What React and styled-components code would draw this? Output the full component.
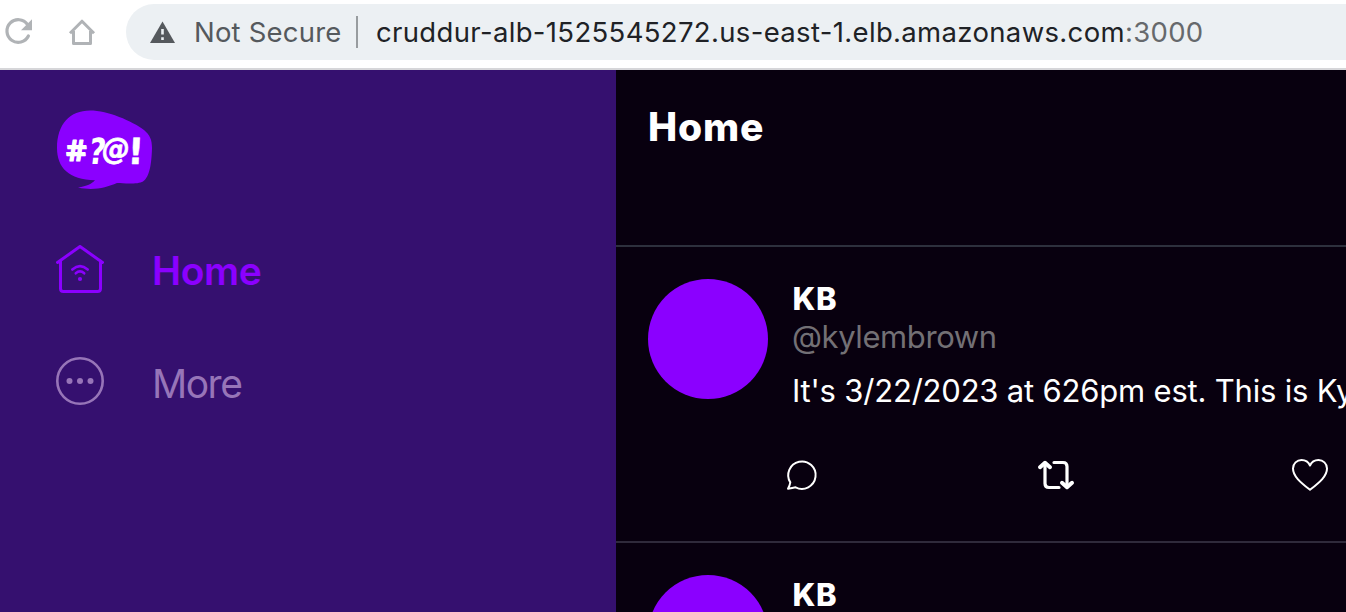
import React from "react";
import styled, { createGlobalStyle } from "styled-components";

const GlobalStyle = createGlobalStyle`
  *, *::before, *::after { box-sizing: border-box; }
  body {
    margin: 0;
    overflow: hidden;
    background: #08000f;
    font-family: Inter, "Liberation Sans", sans-serif;
    -webkit-font-smoothing: antialiased;
  }
  p, h1 { margin: 0; }
`;

const Screen = styled.div`
  display: flex;
  flex-direction: column;
  width: 100%;
  height: 100vh;
  overflow: hidden;
`;

const BrowserBar = styled.header`
  display: flex;
  align-items: flex-start;
  flex: none;
  height: 70px;
  padding-top: 4px;
  background: #fff;
  border-bottom: 2px solid #d6d6d9;
`;

const BarIcon = styled.svg`
  flex: none;
  display: block;
  width: ${(p) => p.$width}px;
  height: 56px;
`;

const AddressField = styled.div`
  display: flex;
  align-items: center;
  flex: 1;
  height: 56px;
  padding-left: 23px;
  background: #ecf0f3;
  border-radius: 28px 0 0 28px;
  white-space: nowrap;
`;

const Warning = styled.svg`
  flex: none;
  width: 27px;
  height: 24px;
`;

const SecurityLabel = styled.span`
  width: 162px;
  margin-left: 18px;
  font-size: 27.5px;
  line-height: 56px;
  letter-spacing: 0.2px;
  color: #55595d;
`;

const FieldDivider = styled.span`
  width: 2px;
  height: 32px;
  margin-right: 18px;
  background: #989c9f;
`;

const Url = styled.span`
  font-size: 27.5px;
  line-height: 56px;
  letter-spacing: 0.34px;
  color: #202226;
`;

const Port = styled.span`
  color: #66696c;
`;

const AppBody = styled.div`
  display: flex;
  flex: 1;
  min-height: 0;
`;

const Sidebar = styled.nav`
  display: flex;
  flex-direction: column;
  flex: none;
  width: 616px;
  padding: 40px 56px;
  background: #35106f;
`;

const Logo = styled.svg`
  width: 98px;
  height: 80px;
  margin-bottom: 25px;
`;

const LogoText = styled.text`
  font-family: "DejaVu Sans", sans-serif;
  font-weight: 700;
  fill: #fff;
  stroke: #fff;
  stroke-width: ${(p) => p.$stroke || 0};
  stroke-linejoin: round;
`;

const NavItem = styled.div`
  display: flex;
  align-items: center;
  height: 112px;
  gap: 48px;
  color: ${(p) => (p.$active ? "#8b00ff" : "#9775b8")};
`;

const NavIcon = styled.svg`
  flex: none;
  width: 48px;
  height: 48px;
  margin-top: -5px;
`;

const NavLabel = styled.span`
  padding-top: ${(p) => (p.$active ? 0 : 1)}px;
  font-size: 39px;
  line-height: 48px;
  font-weight: ${(p) => (p.$active ? 600 : 400)};
  letter-spacing: ${(p) => (p.$active ? -0.4 : -1.5)}px;
`;

const Feed = styled.main`
  flex: 1;
  min-width: 0;
  overflow: hidden;
  background: #08000f;
`;

const FeedHeader = styled.div`
  height: 177px;
  padding: 33px 32px;
  border-bottom: 2px solid #2d303d;
`;

const FeedTitle = styled.h1`
  font-size: 39px;
  line-height: 48px;
  font-weight: 800;
  letter-spacing: 0.8px;
  color: #fff;
`;

const Post = styled.article`
  height: 296px;
  padding: 32px;
  padding-right: 0;
  border-bottom: 2px solid #2f2a3b;
`;

const PostTop = styled.div`
  display: flex;
  gap: 24px;
`;

const Avatar = styled.div`
  flex: none;
  width: 120px;
  height: 120px;
  border-radius: 50%;
  background: #8b00ff;
`;

const PostContent = styled.div`
  display: flex;
  flex-direction: column;
  white-space: nowrap;
`;

const DisplayName = styled.span`
  height: 38px;
  padding-left: 0.6px;
  font-size: 31px;
  line-height: 40px;
  font-weight: 800;
  letter-spacing: 0.4px;
  color: #fff;
`;

const Handle = styled.span`
  height: 38px;
  font-size: 31px;
  line-height: 40px;
  letter-spacing: -0.4px;
  color: #737075;
`;

const Message = styled.p`
  margin-top: 16px;
  font-size: 31px;
  line-height: 40px;
  letter-spacing: -0.2px;
  color: #fff;
`;

const Actions = styled.div`
  display: flex;
  gap: 214px;
  margin: 44px 0 0 134px;
`;

const ActionIcon = styled.svg`
  flex: none;
  width: 40px;
  height: 40px;
`;

const posts = [
  { id: 1, name: "KB", handle: "@kylembrown", message: "It's 3/22/2023 at 626pm est. This is Ky" },
  { id: 2, name: "KB" },
];

const ReloadIcon = () => (
  <BarIcon $width={54} viewBox="0 4 54 56" fill="none">
    <path d="M27.500 24.500A11.300 11.300 0 1 0 28.400 36" stroke="#b0b3b6" strokeWidth="3.2" strokeLinecap="round" />
    <path d="M32 19.3V30.2H21Z" fill="#b0b3b6" />
  </BarIcon>
);

const BrowserHomeIcon = () => (
  <BarIcon $width={72} viewBox="54 4 72 56" fill="none" stroke="#b0b3b6" strokeWidth="3" strokeLinejoin="round">
    <path d="M70 33.2L82 21.2L94 33.2" strokeLinecap="butt" />
    <path d="M73.5 31V43.4H90.5V31" />
  </BarIcon>
);

const WarningIcon = () => (
  <Warning viewBox="0 0 27 24">
    <path d="M13.5 1.5L26 23H1Z" fill="#55595d" />
    <path d="M13.5 9V14.5M13.5 17.2V20" stroke="#ecf0f3" strokeWidth="2.6" />
  </Warning>
);

const BrandLogo = () => (
  <Logo viewBox="56 110 98 80">
    <path
      d="M57 148C57 124 70 110.500 90 110.500C108 110.500 132 121 144 130C150 135 152 140 152 148C151.500 169 148 178 143 181.500C138 184.500 124 183.500 117 183C106 187.500 94 191 78 187.500C87 186.500 92 183.500 95 180.300C69 179.500 57 168 57 148Z"
      fill="#8b00ff"
    />
    <LogoText $stroke={1.2} transform="translate(65.500 160.500) scale(.97 1) skewX(5)" fontSize="29">#</LogoText>
    <LogoText transform="translate(87.500 163.500) scale(.8 1) skewX(-9)" fontSize="36">?</LogoText>
    <LogoText $stroke={0.7} transform="translate(100.500 159) scale(.93 1) skewX(-8)" fontSize="30">@</LogoText>
    <LogoText $stroke={0.3} transform="translate(127 163.500) skewX(-3)" fontSize="36">!</LogoText>
  </Logo>
);

const SmartHomeIcon = () => (
  <NavIcon viewBox="56 245 48 48" fill="none" stroke="currentColor" strokeWidth="3" strokeLinecap="round" strokeLinejoin="round">
    <path d="M57.500 262.500L80 246.500L102.500 262.500" />
    <path d="M60.500 261V288.500Q60.500 291.500 63.500 291.500H97.500Q100.500 291.500 100.500 288.500V261" />
    <path d="M72.300 269.500Q80 262.900 87.700 269.500M75.800 273.300Q80 269.600 84.200 273.300" strokeWidth="2.600" />
    <circle cx="80" cy="279" r="2.100" fill="currentColor" stroke="none" />
  </NavIcon>
);

const MoreIcon = () => (
  <NavIcon viewBox="0 0 48 48">
    <circle cx="24" cy="24" r="22.700" fill="none" stroke="currentColor" strokeWidth="2.600" />
    <circle cx="13.500" cy="24" r="3" fill="currentColor" />
    <circle cx="24" cy="24" r="3" fill="currentColor" />
    <circle cx="34.500" cy="24" r="3" fill="currentColor" />
  </NavIcon>
);

const ReplyIcon = () => (
  <ActionIcon viewBox="782 455 40 40" fill="none" stroke="#fff" strokeWidth="2" strokeLinejoin="round">
    <path d="M790.300 482.400A13.700 13.700 0 1 1 795.600 487.300Q792.500 488 788 488.700Q789.900 485.300 790.300 482.400Z" />
  </ActionIcon>
);

const RepostIcon = () => (
  <ActionIcon viewBox="1036 455 40 40" fill="none" stroke="#fff" strokeWidth="3.200" strokeLinecap="round" strokeLinejoin="round">
    <path d="M1054 462.500H1063Q1067 462.500 1067 466.500V486M1059 487.500H1049Q1045 487.500 1045 483.500V464" />
    <path d="M1040 467.200L1045 462.800L1050 467.200M1062 482.800L1067 487.200L1072 482.800" strokeWidth="4" />
  </ActionIcon>
);

const LikeIcon = () => (
  <ActionIcon viewBox="1290 455 40 40" fill="none" stroke="#fff" strokeWidth="2" strokeLinejoin="round">
    <path d="M1310 489.800C1300 482 1293 476 1293 468.500C1293 463.500 1297 460 1301.500 460C1305.500 460 1308.500 462 1310 465.500C1311.500 462 1314.500 460 1318.500 460C1323 460 1327 463.500 1327 468.500C1327 476 1320 482 1310 489.800Z" />
  </ActionIcon>
);

export default function App() {
  return (
    <Screen>
      <GlobalStyle />
      <BrowserBar>
        <ReloadIcon />
        <BrowserHomeIcon />
        <AddressField>
          <WarningIcon />
          <SecurityLabel>Not Secure</SecurityLabel>
          <FieldDivider />
          <Url>cruddur-alb-1525545272.us-east-1.elb.amazonaws.com<Port>:3000</Port></Url>
        </AddressField>
      </BrowserBar>
      <AppBody>
        <Sidebar>
          <BrandLogo />
          <NavItem $active>
            <SmartHomeIcon />
            <NavLabel $active>Home</NavLabel>
          </NavItem>
          <NavItem>
            <MoreIcon />
            <NavLabel>More</NavLabel>
          </NavItem>
        </Sidebar>
        <Feed>
          <FeedHeader>
            <FeedTitle>Home</FeedTitle>
          </FeedHeader>
          {posts.map((post) => (
            <Post key={post.id}>
              <PostTop>
                <Avatar />
                <PostContent>
                  <DisplayName>{post.name}</DisplayName>
                  {post.handle && <Handle>{post.handle}</Handle>}
                  {post.message && <Message>{post.message}</Message>}
                </PostContent>
              </PostTop>
              <Actions>
                <ReplyIcon />
                <RepostIcon />
                <LikeIcon />
              </Actions>
            </Post>
          ))}
        </Feed>
      </AppBody>
    </Screen>
  );
}
